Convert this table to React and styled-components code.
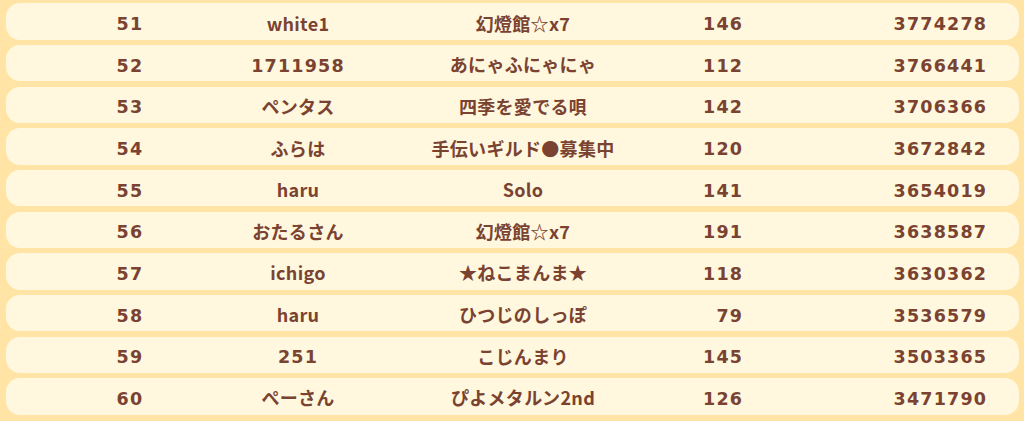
import React from "react";
import styled, { createGlobalStyle } from "styled-components";

const GlobalStyle = createGlobalStyle`
  html, body {
    margin: 0;
    padding: 0;
    background: #ffe4a6;
  }
  body {
    font-family: "Noto Sans CJK JP", "Noto Sans", sans-serif;
  }
`;

const Board = styled.div`
  display: flex;
  flex-direction: column;
  gap: 5.17px;
  padding: 3.3px 5px 0 6px;
  min-height: 421px;
  box-sizing: border-box;
  background: #ffe4a6;
`;

const Row = styled.div`
  display: grid;
  grid-template-columns: 120px 216px 234px 102px 244px;
  align-items: center;
  height: 36.5px;
  padding-left: 64px;
  border-radius: 14px;
  background: #fff7de;
  color: #7a4331;
  font-size: 18px;
  font-weight: 700;
`;

// digits in the original are wide, so number cells use a wider face
const Cell = styled.div`
  text-align: ${(p) => p.$align || "center"};
  white-space: nowrap;
  line-height: 22px;
  font-family: ${(p) =>
    p.$numeric
      ? '"DejaVu Sans", "Noto Sans CJK JP", sans-serif'
      : '"Noto Sans CJK JP", "Noto Sans", sans-serif'};
  font-size: ${(p) => (p.$numeric ? "17.5px" : "18px")};
  letter-spacing: ${(p) => (p.$numeric ? "1.2px" : "0.3px")};
  margin-right: ${(p) => (p.$numeric && p.$align === "right" ? "-1.2px" : "0")};
  padding-top: ${(p) => (p.$numeric ? "5px" : "2px")};
`;

const ranking = [
  [51, "white1", "幻燈館☆x7", 146, 3774278],
  [52, "1711958", "あにゃふにゃにゃ", 112, 3766441],
  [53, "ペンタス", "四季を愛でる唄", 142, 3706366],
  [54, "ふらは", "手伝いギルド●募集中", 120, 3672842],
  [55, "haru", "Solo", 141, 3654019],
  [56, "おたるさん", "幻燈館☆x7", 191, 3638587],
  [57, "ichigo", "★ねこまんま★", 118, 3630362],
  [58, "haru", "ひつじのしっぽ", 79, 3536579],
  [59, "251", "こじんまり", 145, 3503365],
  [60, "ぺーさん", "ぴよメタルン2nd", 126, 3471790],
];

const isNum = (v) => /^\d+$/.test(String(v));

export default function App() {
  return (
    <>
      <GlobalStyle />
      <Board>
        {ranking.map(([rank, name, guild, level, score]) => (
          <Row key={rank}>
            <Cell $numeric>{rank}</Cell>
            <Cell $numeric={isNum(name)}>{name}</Cell>
            <Cell>{guild}</Cell>
            <Cell $numeric $align="right">{level}</Cell>
            <Cell $numeric $align="right">{score}</Cell>
          </Row>
        ))}
      </Board>
    </>
  );
}
